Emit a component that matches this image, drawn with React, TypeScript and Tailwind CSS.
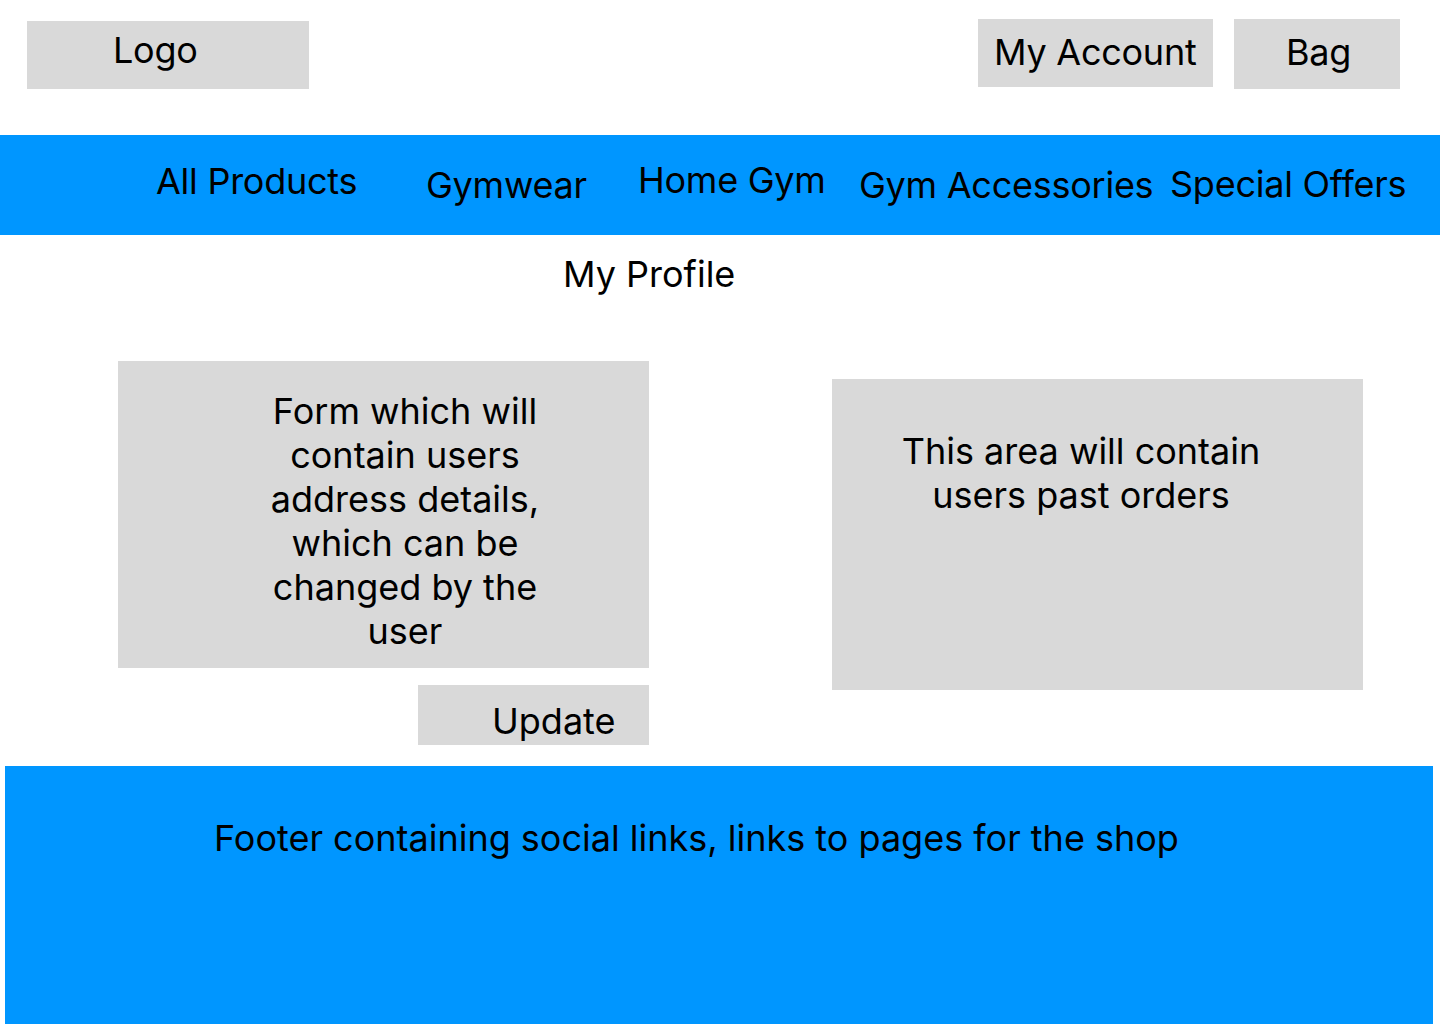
import React from "react";

const navItems = [
  { label: "All Products", cls: "w-[270px] mt-[24px]" },
  { label: "Gymwear", cls: "w-[212px] mt-[28px]" },
  { label: "Home Gym", cls: "w-[221px] mt-[23px]" },
  { label: "Gym Accessories", cls: "w-[311px] mt-[28px]" },
  { label: "Special Offers", cls: "mt-[27px]" },
];

export default function App() {
  return (
    <div
      className="w-[1440px] h-[1024px] overflow-hidden bg-white text-black text-[36px] leading-[44px]"
      style={{ fontFamily: "Inter, 'Noto Sans', sans-serif" }}
    >
      {/* Header */}
      <header className="h-[135px] flex items-start tracking-[-0.25px]">
        <div className="ml-[27px] mt-[21px] w-[282px] h-[68px] bg-[#d9d9d9] pl-[86px] pt-[7px] whitespace-nowrap">
          Logo
        </div>
        <div className="ml-auto mt-[19px] w-[235px] h-[68px] bg-[#d9d9d9] pl-[16px] pt-[11px] whitespace-nowrap">
          My Account
        </div>
        <div className="ml-[21px] mr-[40px] mt-[19px] w-[166px] h-[70px] bg-[#d9d9d9] pl-[52px] pt-[11px] whitespace-nowrap">
          Bag
        </div>
      </header>

      {/* Navigation */}
      <nav className="h-[100px] bg-[#0096ff] flex items-start pl-[156px] tracking-[-0.25px]">
        {navItems.map((item) => (
          <div key={item.label} className={`${item.cls} whitespace-nowrap`}>
            {item.label}
          </div>
        ))}
      </nav>

      {/* Main */}
      <main className="h-[531px]">
        <h1 className="pt-[17px] pl-[563px] whitespace-nowrap">My Profile</h1>
        <div className="flex items-start mt-[65px]">
          <div className="ml-[118px] w-[531px] flex flex-col items-end">
            <div className="w-full h-[307px] bg-[#d9d9d9] pt-[28px]">
              <p className="ml-[137px] w-[300px] text-center">
                Form which will contain users address details, which can be changed by the user
              </p>
            </div>
            <button className="mt-[17px] w-[231px] h-[60px] bg-[#d9d9d9] pl-[74px] pt-[11px] text-left self-end">
              <span className="block leading-[44px] whitespace-nowrap">Update</span>
            </button>
          </div>
          <div className="ml-[183px] mt-[18px] w-[531px] h-[311px] bg-[#d9d9d9] pt-[50px]">
            <p className="ml-[49px] w-[400px] text-center">
              This area will contain users past orders
            </p>
          </div>
        </div>
      </main>

      {/* Footer */}
      <footer className="ml-[5px] w-[1428px] h-[258px] bg-[#0096ff] pt-[50px] pl-[209px] whitespace-nowrap">
        Footer containing social links, links to pages for the shop
      </footer>
    </div>
  );
}
